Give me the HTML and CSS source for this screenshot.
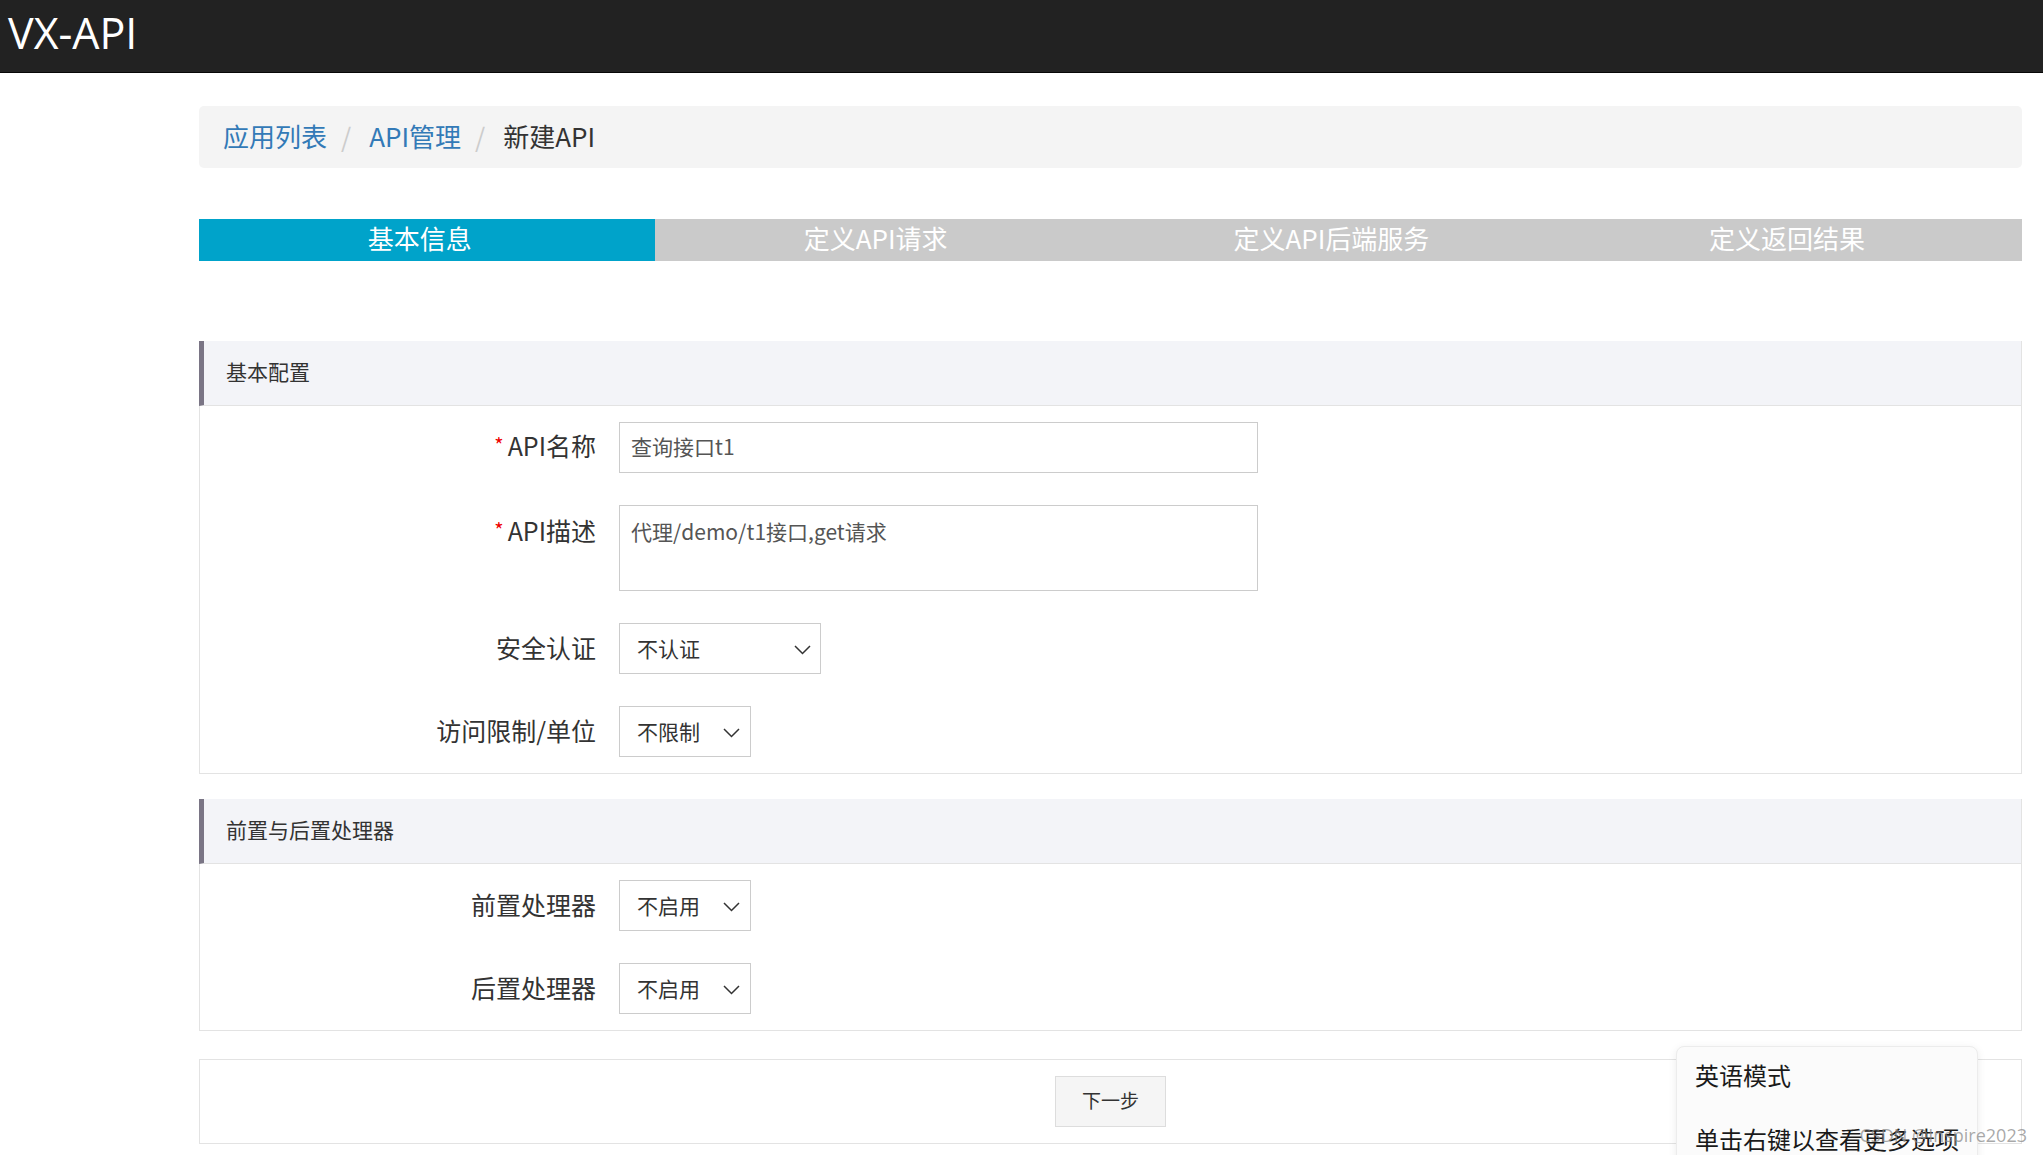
FILE: index.html
```html
<!DOCTYPE html>
<html lang="zh-CN">
<head>
<meta charset="utf-8">
<title>VX-API</title>
<link rel="stylesheet" href="styles.css">
</head>
<body>
<header class="navbar">
  <span class="brand">VX-API</span>
</header>

<main class="main">
  <nav class="breadcrumb">
    <a class="crumb-link">应用列表</a>
    <span class="sep">/</span>
    <a class="crumb-link">API管理</a>
    <span class="sep">/</span>
    <span class="crumb-active">新建API</span>
  </nav>

  <div class="steps">
    <div class="step active">基本信息</div>
    <div class="step">定义API请求</div>
    <div class="step">定义API后端服务</div>
    <div class="step">定义返回结果</div>
  </div>

  <section class="panel first">
    <div class="panel-head">基本配置</div>
    <div class="panel-body">
      <div class="row">
        <label class="label"><span class="req">*</span>API名称</label>
        <div class="input">查询接口t1</div>
      </div>
      <div class="row top">
        <label class="label label-top"><span class="req">*</span>API描述</label>
        <div class="textarea">代理/demo/t1接口,get请求</div>
      </div>
      <div class="row">
        <label class="label">安全认证</label>
        <div class="select wide"><span>不认证</span><svg class="chev" width="17" height="10" viewBox="0 0 17 10"><path d="M1 1 L8.5 8.5 L16 1" fill="none" stroke="#333" stroke-width="1.5"/></svg></div>
      </div>
      <div class="row">
        <label class="label">访问限制/单位</label>
        <div class="select"><span>不限制</span><svg class="chev" width="17" height="10" viewBox="0 0 17 10"><path d="M1 1 L8.5 8.5 L16 1" fill="none" stroke="#333" stroke-width="1.5"/></svg></div>
      </div>
    </div>
  </section>

  <section class="panel">
    <div class="panel-head">前置与后置处理器</div>
    <div class="panel-body">
      <div class="row">
        <label class="label">前置处理器</label>
        <div class="select"><span>不启用</span><svg class="chev" width="17" height="10" viewBox="0 0 17 10"><path d="M1 1 L8.5 8.5 L16 1" fill="none" stroke="#333" stroke-width="1.5"/></svg></div>
      </div>
      <div class="row">
        <label class="label">后置处理器</label>
        <div class="select"><span>不启用</span><svg class="chev" width="17" height="10" viewBox="0 0 17 10"><path d="M1 1 L8.5 8.5 L16 1" fill="none" stroke="#333" stroke-width="1.5"/></svg></div>
      </div>
    </div>
  </section>

  <section class="panel actions">
    <button class="btn">下一步</button>
  </section>
</main>

<div class="ctx-menu">
  <div class="ctx-item">英语模式</div>
  <div class="ctx-item">单击右键以查看更多选项</div>
</div>
<div class="watermark">CSDN @Inspire2023</div>
</body>
</html>
```

FILE: styles.css
```css
html, body {
  margin: 0;
  padding: 0;
}
body {
  background: #fff;
  font-family: "Open Sans", "Noto Sans CJK SC", sans-serif;
  color: #333;
  overflow: hidden;
  height: 1155px;
  position: relative;
}

.navbar {
  height: 72px;
  background: #222;
  border-bottom: 1px solid #080808;
  display: flex;
  align-items: center;
}
.brand {
  color: #fff;
  font-size: 43px;
  line-height: 66px;
  padding-left: 8px;
  margin-top: -6px;
}

.main {
  padding: 33px 21px 0 199px;
}

.breadcrumb {
  height: 62px;
  box-sizing: border-box;
  padding: 0 0 4px 24px;
  background: #f4f4f4;
  border-radius: 5px;
  display: flex;
  align-items: center;
  font-size: 26px;
  font-family: "Noto Sans CJK SC", sans-serif;
}
.crumb-link {
  color: #337ab7;
}
.crumb-active {
  color: #333;
}
.sep {
  color: #ccc;
  padding: 0 18px 0 14px;
}

.steps {
  margin-top: 51px;
  height: 42px;
  display: grid;
  grid-template-columns: repeat(4, 1fr);
  background: #cacaca;
}
.step {
  color: #fff;
  text-align: center;
  font-size: 26px;
  line-height: 38px;
  padding: 0 14px 4px 0;
  font-family: "Noto Sans CJK SC", sans-serif;
}
.step.active {
  background: #00a3ca;
}

.panel {
  border: 1px solid #e3e3e3;
  margin-top: 25px;
}
.panel.first {
  margin-top: 80px;
}
.panel-head {
  height: 64px;
  margin: -1px 0 0 -1px;
  background: #f3f4f8;
  border-left: 5px solid #7a7585;
  border-bottom: 1px solid #e3e3e3;
  padding-left: 22px;
  font-size: 21px;
  line-height: 60px;
  color: #333;
  font-family: "Noto Sans CJK SC", sans-serif;
}
.panel-body {
  padding: 16px 0 16px;
  display: flex;
  flex-direction: column;
  gap: 32px;
}
.row {
  display: flex;
  align-items: center;
  gap: 23px;
}
.row.top {
  align-items: flex-start;
}
.label {
  width: 396px;
  text-align: right;
  font-size: 25px;
  line-height: 30px;
  padding-bottom: 3px;
  color: #333;
  font-family: "Noto Sans CJK SC", sans-serif;
}
.label-top {
  padding-top: 10px;
}
.req {
  color: #e00;
  font-size: 20px;
  margin-right: 4px;
  position: relative;
  top: -3px;
}
.input, .textarea, .select {
  border: 1px solid #ccc;
  box-sizing: border-box;
  font-size: 21px;
  color: #555;
  font-family: "Noto Sans CJK SC", sans-serif;
  background: #fff;
}
.input {
  width: 639px;
  height: 51px;
  padding: 0 11px 2px;
  line-height: 47px;
}
.textarea {
  width: 639px;
  height: 86px;
  padding: 11px 11px;
  line-height: 28px;
}
.select {
  width: 132px;
  height: 51px;
  padding: 0 10px 2px 17px;
  display: flex;
  align-items: center;
  justify-content: space-between;
  color: #333;
}
.select.wide {
  width: 202px;
  padding-right: 9px;
}
.chev {
  display: block;
  margin-top: 4px;
}

.actions {
  margin-top: 28px;
  padding: 16px 0;
  display: flex;
  justify-content: center;
}
.btn {
  width: 111px;
  height: 51px;
  background: #f5f5f5;
  border: 1px solid #ddd;
  font-size: 19px;
  color: #333;
  font-family: "Noto Sans CJK SC", sans-serif;
  padding: 0 0 4px;
}

.ctx-menu {
  position: absolute;
  left: 1676px;
  top: 1046px;
  width: 302px;
  height: 140px;
  background: #fbfbfb;
  border: 1px solid #ececec;
  border-radius: 8px;
  box-shadow: 0 2px 8px rgba(0, 0, 0, 0.08);
  padding-top: 4px;
  box-sizing: border-box;
}
.ctx-item {
  padding-left: 18px;
  height: 64px;
  line-height: 48px;
  font-size: 24px;
  color: #1a1a1a;
  font-family: "Noto Sans CJK SC", sans-serif;
  white-space: nowrap;
}
.watermark {
  position: absolute;
  right: 16px;
  top: 1123px;
  font-size: 18px;
  color: rgba(140, 140, 140, 0.75);
  font-family: "Open Sans", sans-serif;
}
```
